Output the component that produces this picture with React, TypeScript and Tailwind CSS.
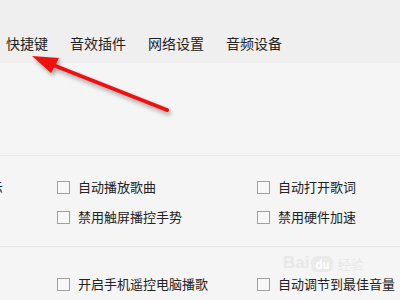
import { ReactNode } from 'react';

const tabs = ['快捷键', '音效插件', '网络设置', '音频设备'];

const Check = ({ children }: { children: ReactNode }) => (
  <div className="flex items-center gap-[8px] h-[20px]">
    <span className="w-[13px] h-[13px] border border-[#a0a0a0] bg-[#f8f8f8] shrink-0" />
    <span className="text-[13px] leading-[20px] text-[#222] whitespace-nowrap">{children}</span>
  </div>
);

export default function App() {
  return (
    <div
      className="relative w-[400px] h-[300px] overflow-hidden bg-[#f5f5f5]"
      style={{ fontFamily: '"Noto Sans CJK SC", "Noto Sans", sans-serif' }}
    >
      <div className="h-[63px] bg-[#efefef] pt-[34px] pl-[6px] flex gap-[22px]">
        {tabs.map((t) => (
          <span key={t} className="text-[14px] leading-[18px] text-[#222] whitespace-nowrap">
            {t}
          </span>
        ))}
      </div>

      <div className="h-[92px]" />
      <div className="h-px bg-[#e6e6e6]" />

      <div className="pt-[21px] flex flex-col gap-[10px]">
        <div className="flex">
          <div className="w-[57px] shrink-0 overflow-hidden">
            <span className="block -ml-[10px] text-[13px] leading-[20px] text-[#222]">示</span>
          </div>
          <div className="w-[200px] shrink-0">
            <Check>自动播放歌曲</Check>
          </div>
          <Check>自动打开歌词</Check>
        </div>
        <div className="flex pl-[57px]">
          <div className="w-[200px] shrink-0">
            <Check>禁用触屏播控手势</Check>
          </div>
          <Check>禁用硬件加速</Check>
        </div>
      </div>

      <div className="h-[19px]" />
      <div className="h-px bg-[#e6e6e6]" />

      <div className="pt-[27px] flex pl-[57px]">
        <div className="w-[200px] shrink-0">
          <Check>开启手机遥控电脑播歌</Check>
        </div>
        <Check>自动调节到最佳音量</Check>
      </div>

      <div className="absolute left-[283px] top-[254px] flex items-end gap-[2px] text-[#e8e8e8] select-none">
        <span className="text-[17px] leading-[18px] font-bold" style={{ fontFamily: '"Liberation Sans", sans-serif' }}>
          Bai
        </span>
        <span className="w-[22px] h-[16px] rounded-[6px] bg-[#eaeaea] text-white text-[11px] leading-[16px] text-center font-bold">
          du
        </span>
        <span className="text-[13px] leading-[16px] ml-[2px]">经验</span>
      </div>

      <svg
        className="absolute left-0 top-0 pointer-events-none"
        width="400"
        height="300"
        style={{ filter: 'drop-shadow(2px 3px 2px rgba(0,0,0,0.35))' }}
      >
        <line x1="167" y1="110" x2="48" y2="63" stroke="#f01010" strokeWidth="4" strokeLinecap="round" />
        <polygon points="32,56 59,58 51,73" fill="#f01010" />
      </svg>
    </div>
  );
}
